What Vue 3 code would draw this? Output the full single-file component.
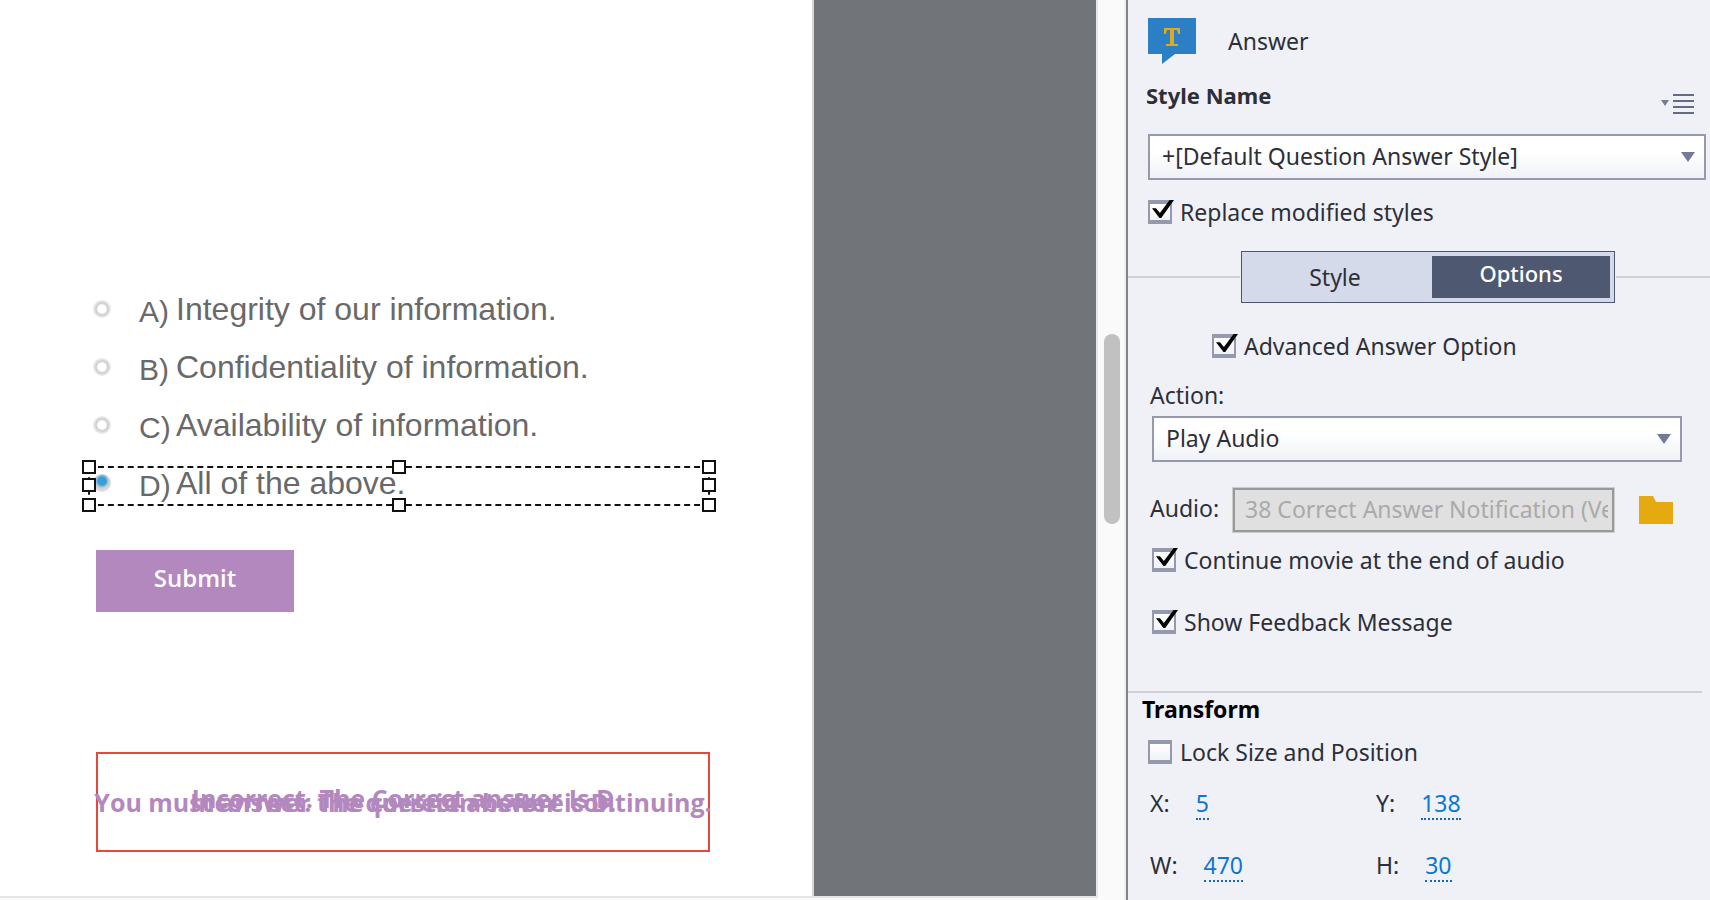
<script setup>
import { ref, reactive } from 'vue'

const answers = [
  { id: 'a', letter: 'A)', text: 'Integrity of our information.' },
  { id: 'b', letter: 'B)', text: 'Confidentiality of information.' },
  { id: 'c', letter: 'C)', text: 'Availability of information.' },
  { id: 'd', letter: 'D)', text: 'All of the above.' }
]

const handles = ['nw', 'n', 'ne', 'w', 'e', 'sw', 's', 'se']

const selected = ref('d')
const tab = ref('options')
const styleName = ref('+[Default Question Answer Style]')
const action = ref('Play Audio')
const audio = ref('38 Correct Answer Notification (Version 2)')

const checks = reactive({
  replace: true,
  advanced: true,
  continueMovie: true,
  feedback: true,
  lock: false
})

const position = [
  { label: 'X:', value: 5 },
  { label: 'Y:', value: 138 },
  { label: 'W:', value: 470 },
  { label: 'H:', value: 30 }
]
</script>

<template>
  <div class="editor">
    <main class="workspace">
      <section class="slide">
        <div class="answers">
          <label
            v-for="item in answers"
            :key="item.id"
            class="answer"
            :class="{ selected: selected === item.id }"
          >
            <input v-model="selected" type="radio" name="answer" class="radio" :value="item.id" />
            <span class="letter">{{ item.letter }}</span>
            <span class="answer-text">{{ item.text }}</span>
            <template v-if="selected === item.id">
              <i v-for="h in handles" :key="h" class="handle" :class="h"></i>
            </template>
          </label>
        </div>
        <button type="button" class="submit">Submit</button>
        <!-- feedback captions share one spot on the slide -->
        <div class="feedback">
          <p class="caption">You must answer the question before continuing.</p>
          <p class="caption">Incorrect. The correct answer is D.</p>
          <p class="caption raised">Incorrect. The Correct answer Is D</p>
        </div>
      </section>
      <div class="scroll-track">
        <div class="thumb"></div>
      </div>
    </main>

    <aside class="panel">
      <header class="object-head">
        <svg class="caption-icon" width="48" height="46" viewBox="0 0 48 46">
          <path d="M0 0h48v36H27L14 46V36H0z" fill="#2a7fc5" />
          <path
            d="M16 10h16v6h-2l-1-4h-3v14h4v2H18v-2h4V12h-3l-1 4h-2z"
            fill="#dcab22"
          />
        </svg>
        <span>Answer</span>
      </header>

      <div class="style-head">
        <label for="style-name">Style Name</label>
        <button type="button" class="menu" aria-label="Style menu">
          <svg width="34" height="20" viewBox="0 0 34 20">
            <path d="M1 6h8L5 12z" fill="#777c95" />
            <path d="M13 1h21M13 7h21M13 13h21M13 19h21" stroke="#666b85" stroke-width="2" />
          </svg>
        </button>
      </div>
      <div class="select-box">
        <select id="style-name" v-model="styleName">
          <option>+[Default Question Answer Style]</option>
        </select>
      </div>
      <label class="check">
        <input v-model="checks.replace" type="checkbox" />
        <span>Replace modified styles</span>
      </label>

      <div class="tabs-row">
        <div class="tabs">
          <button type="button" :class="{ active: tab === 'style' }" @click="tab = 'style'">Style</button>
          <button type="button" :class="{ active: tab === 'options' }" @click="tab = 'options'">Options</button>
        </div>
      </div>

      <div class="options">
        <label class="check advanced">
          <input v-model="checks.advanced" type="checkbox" />
          <span>Advanced Answer Option</span>
        </label>
        <label class="action-label" for="action">Action:</label>
        <div class="select-box action-box">
          <select id="action" v-model="action">
            <option>Play Audio</option>
          </select>
        </div>
        <div class="audio-row">
          <label for="audio">Audio:</label>
          <input id="audio" v-model="audio" type="text" class="audio" disabled />
          <button type="button" class="folder" aria-label="Browse">
            <svg width="34" height="28" viewBox="0 0 34 28">
              <path d="M0 0h14l3 6h17v22H0z" fill="#e4aa10" />
            </svg>
          </button>
        </div>
        <label class="check">
          <input v-model="checks.continueMovie" type="checkbox" />
          <span>Continue movie at the end of audio</span>
        </label>
        <label class="check show">
          <input v-model="checks.feedback" type="checkbox" />
          <span>Show Feedback Message</span>
        </label>
      </div>

      <section class="transform">
        <h2>Transform</h2>
        <label class="check">
          <input v-model="checks.lock" type="checkbox" />
          <span>Lock Size and Position</span>
        </label>
        <div class="position">
          <div v-for="item in position" :key="item.label" class="field">
            <span>{{ item.label }}</span>
            <a href="#">{{ item.value }}</a>
          </div>
        </div>
      </section>
    </aside>
  </div>
</template>

<style>
body {
  margin: 0;
  background: #fafafa;
}
</style>

<style scoped>
.editor {
  display: flex;
  min-height: 100vh;
  box-sizing: border-box;
  overflow: hidden;
  font-family: "Noto Sans", "Open Sans", sans-serif;
  font-size: 23px;
  line-height: 30px;
  color: #2d2f38;
}

.editor * {
  box-sizing: border-box;
}

button,
select,
input {
  margin: 0;
  font: inherit;
  color: inherit;
}

.workspace {
  flex: 1;
  display: flex;
  min-width: 0;
  padding-bottom: 2px;
  background: #fafafa;
  border-right: 2px solid #efefef;
}

.slide {
  flex: 1;
  min-width: 0;
  padding: 280px 0 44px 88px;
  border-bottom: 2px solid #e6e6e6;
  background: linear-gradient(to left, #717479 282px, #d8d8d8 282px, #d8d8d8 284px, #fff 284px);
}

.answers {
  width: 622px;
}

.answer {
  position: relative;
  display: flex;
  align-items: center;
  height: 58px;
  font-family: "Liberation Sans", Arial, sans-serif;
  font-size: 32px;
  line-height: 36px;
  color: #696969;
}

.radio {
  appearance: none;
  width: 18px;
  height: 18px;
  margin: 0 28px 0 5px;
  border-radius: 50%;
  background: radial-gradient(circle, #fff 4px, #c9c9c9 6px, #dedede 7px, #ededed 9px);
}

.radio:checked {
  background: radial-gradient(circle at 9px 7px, #369fdb 4px, #a9c4d4 6px, #cfcfcf 7px, #e6e6e6 11px);
}

.letter {
  width: 37px;
  padding-top: 6px;
  font-size: 30px;
}

.selected::before {
  content: "";
  position: absolute;
  inset: 12px 0 6px 0;
  border: 2px dashed #111;
}

.handle {
  position: absolute;
  width: 14px;
  height: 14px;
  margin: -7px;
  border: 2px solid #111;
  background: #fff;
}

.nw, .w, .sw { left: 1px; }
.n, .s { left: 50%; }
.ne, .e, .se { left: calc(100% - 1px); }
.nw, .n, .ne { top: 13px; }
.w, .e { top: 31px; }
.sw, .s, .se { top: calc(100% - 7px); }

.submit {
  display: block;
  width: 198px;
  height: 62px;
  margin: 38px 0 140px 8px;
  padding: 0 0 6px;
  border: 0;
  background: #b388be;
  color: #fff;
  font-family: "Open Sans", "Noto Sans", sans-serif;
  font-size: 24px;
  font-weight: 600;
}

.feedback {
  display: grid;
  width: 614px;
  height: 100px;
  margin-left: 8px;
  align-items: center;
  justify-content: center;
  justify-items: center;
  border: 2px solid #e5473b;
}

.caption {
  grid-area: 1 / 1;
  margin: 0;
  white-space: nowrap;
  font-family: "Open Sans", "Noto Sans", sans-serif;
  font-size: 25px;
  font-weight: 700;
  color: #b388be;
}

.raised {
  padding-bottom: 8px;
}

.scroll-track {
  width: 28px;
  padding: 334px 4px 0 6px;
  border-left: 2px solid #e6e6e8;
}

.thumb {
  width: 16px;
  height: 190px;
  border-radius: 8px;
  background: #c1c1c1;
}

.panel {
  width: 584px;
  flex-shrink: 0;
  padding-top: 18px;
  border-left: 2px solid #808388;
  background: #f0f1f7;
}

.object-head {
  display: flex;
  align-items: center;
  gap: 32px;
  padding-left: 20px;
}

.style-head {
  display: flex;
  justify-content: space-between;
  align-items: flex-start;
  height: 54px;
  margin-top: 16px;
  padding: 0 16px 0 18px;
  font-size: 22px;
  font-weight: 700;
}

.menu,
.folder {
  display: flex;
  padding: 0;
  border: 0;
  background: none;
}

.menu {
  margin-top: 14px;
}

.select-box {
  position: relative;
  height: 46px;
  margin: 0 4px 0 20px;
}

.select-box select {
  appearance: none;
  width: 100%;
  height: 100%;
  padding: 0 40px 3px 12px;
  border: 2px solid #9499ad;
  border-radius: 0;
  background: linear-gradient(#fff 40%, #f0f2f7);
}

.select-box::after {
  content: "";
  position: absolute;
  right: 11px;
  top: 18px;
  border: 7px solid transparent;
  border-top: 10px solid #72799a;
  border-bottom: 0;
}

.check {
  display: flex;
  align-items: center;
  gap: 8px;
  height: 30px;
  margin: 17px 0 0 20px;
}

.check span {
  padding-bottom: 1px;
}

.check input {
  appearance: none;
  position: relative;
  width: 24px;
  height: 24px;
  border: solid #9499ad;
  border-width: 4px 2px;
  background: linear-gradient(#fff, #f1f2f6);
}

.check input:checked::after {
  content: "";
  position: absolute;
  left: 2px;
  top: -4px;
  width: 22px;
  height: 18px;
  background: #000;
  clip-path: polygon(0 46%, 18% 46%, 36% 72%, 80% 0, 100% 0, 42% 100%, 34% 100%);
}

.tabs-row {
  display: flex;
  align-items: center;
  gap: 1px;
  margin-top: 24px;
}

.tabs-row::before,
.tabs-row::after {
  content: "";
  height: 2px;
  background: #d0d1d7;
}

.tabs-row::before {
  width: 112px;
}

.tabs-row::after {
  flex: 1;
}

.tabs {
  display: grid;
  grid-template-columns: 1fr 1fr;
  gap: 8px;
  width: 374px;
  height: 52px;
  padding: 4px;
  border: 1px solid #4d566e;
  background: #d5daea;
}

.tabs button {
  padding: 0;
  border: 0;
  background: none;
}

.tabs .active {
  padding-bottom: 8px;
  background: #4e5870;
  color: #fff;
  font-size: 22px;
  font-weight: 500;
}

.options {
  padding: 28px 8px 54px 22px;
}

.options .check {
  margin-left: 2px;
}

.options .advanced {
  margin: 0 0 0 62px;
}

.action-label {
  display: block;
  margin-top: 19px;
}

.options .action-box {
  margin: 6px 20px 0 2px;
}

.audio-row {
  display: flex;
  align-items: center;
  margin: 26px 29px 0 0;
}

.audio-row label {
  padding-bottom: 4px;
}

.audio {
  flex: 1;
  min-width: 0;
  height: 44px;
  margin: 0 25px 0 14px;
  padding: 0 4px 2px 10px;
  border: 2px solid #999;
  border-radius: 0;
  outline: 1px solid #ccc;
  background: #e0e0e0;
  color: #aaa;
}

.options .audio-row + .check {
  margin-top: 13px;
}

.options .show {
  margin-top: 32px;
}

.transform {
  margin-right: 8px;
  padding-left: 14px;
  border-top: 2px solid #cfd0d7;
}

.transform h2 {
  margin: 1px 0 0;
  font-size: 23px;
  font-weight: 700;
  color: #000;
}

.transform .check {
  margin: 13px 0 0 6px;
}

.position {
  display: grid;
  grid-template-columns: 226px 1fr;
  row-gap: 30px;
  padding: 21px 0 0 8px;
}

.field {
  display: flex;
  gap: 26px;
}

.field a {
  height: 32px;
  border-bottom: 2px dotted #1767b1;
  color: #0b78d0;
  text-decoration: none;
}
</style>
